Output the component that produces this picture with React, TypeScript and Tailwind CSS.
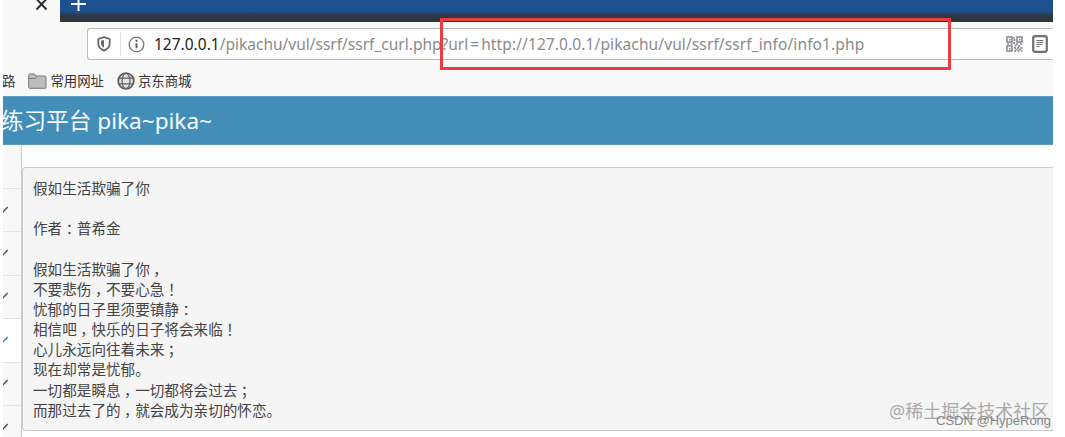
import type { ReactNode } from 'react';

const POEM = [
  '假如生活欺骗了你',
  '',
  '作者：普希金',
  '',
  '假如生活欺骗了你，',
  '不要悲伤，不要心急！',
  '忧郁的日子里须要镇静：',
  '相信吧，快乐的日子将会来临！',
  '心儿永远向往着未来；',
  '现在却常是忧郁。',
  '一切都是瞬息，一切都将会过去；',
  '而那过去了的，就会成为亲切的怀恋。',
];

const MENU = [
  { id: 2, active: false },
  { id: 3, active: false },
  { id: 4, active: false },
  { id: 5, active: true },
  { id: 6, active: false },
  { id: 7, active: false },
];

function ShieldIcon() {
  return (
    <svg className="h-[16px] w-[14px] shrink-0" viewBox="0 0 14 16" fill="none" stroke="#66666a">
      <path d="M7 1.2 12.7 3v4.6c0 3.2-2 5.6-5.7 7-3.7-1.4-5.7-3.8-5.7-7V3z" strokeWidth="1.8" strokeLinejoin="round" />
      <path d="M7 4v7.7C5 10.6 4 9.3 4 7.5V4.8z" fill="#66666a" stroke="none" />
    </svg>
  );
}

function InfoIcon() {
  return (
    <svg className="h-[17px] w-[17px] shrink-0" viewBox="0 0 17 17" fill="none" stroke="#77777a">
      <circle cx="8.5" cy="8.5" r="7.3" strokeWidth="1.3" />
      <path d="M8.5 7.3v5" stroke="#5c5c60" strokeWidth="1.9" />
      <circle cx="8.5" cy="4.8" r="1.15" fill="#5c5c60" stroke="none" />
    </svg>
  );
}

function FolderIcon() {
  return (
    <svg className="h-[16px] w-[19px] shrink-0" viewBox="0 0 19 16" fill="#bdbdbd" stroke="#77777a">
      <path d="M.7 14.5V2.2q0-1.2 1.2-1.2h4.2q.8 0 1.100.8l.5 1.2h9q1.3 0 1.3 1.2v10.3q0 .8-.8.8H1.5q-.8 0-.8-.8z" />
      <path d="M1 5.5h6.200L9 3.700" fill="none" />
    </svg>
  );
}

function GlobeIcon() {
  return (
    <svg className="h-[18px] w-[18px] shrink-0" viewBox="0 0 18 18" fill="none" stroke="#5f5f63">
      <circle cx="9" cy="9" r="7.8" strokeWidth="1.8" fill="#e4e4e4" />
      <ellipse cx="9" cy="9" rx="4" ry="7.5" strokeWidth="1.2" />
      <path d="M2 6.2h14M2 11.8h14" strokeWidth="1.2" />
    </svg>
  );
}

function QrIcon() {
  return (
    <svg className="h-[16px] w-[17px] shrink-0" viewBox="0 0 17 16" fill="none" stroke="#85858a">
      <path d="M1 1h5v5H1zM11 1h5v5h-5zM1 10h5v5H1z" strokeWidth="1.5" />
      <path d="M3 3h1.5v1.5H3zM13 3h1.5v1.5H13zM3 12h1.5v1.5H3z" fill="#85858a" stroke="none" />
      <path d="M8 1v1.5M8.5 3v2M8 6v2M1 8h2M4.5 8h2M10 8h2M14 8h2M8.5 9.5h2M12 9.8h2M8 11.8h2M11 11.8h2M14.5 11.8h2M9.5 13.5h2M13 13.5h2M8 15h2M11.5 15h2M15 15h1.5" strokeWidth="1.7" />
    </svg>
  );
}

function ReaderIcon() {
  return (
    <svg className="h-[18px] w-[16px] shrink-0" viewBox="0 0 16 18" fill="none" stroke="#707074">
      <rect x="1.2" y="1.2" width="13.6" height="15.6" rx="2" strokeWidth="2.2" />
      <path d="M4.5 5.500h7M4.5 7.500h7M4.5 9.500h6M4.5 11.500h3" strokeWidth="1" />
    </svg>
  );
}

function Bookmark({ icon, label }: { icon?: ReactNode; label: string }) {
  return (
    <div className="flex shrink-0 items-center gap-1">
      {icon}
      <span className="-ml-px text-[13.4px] leading-5">{label}</span>
    </div>
  );
}

function TabStrip() {
  return (
    <div className="flex h-[22px] shrink-0">
      <div className="flex w-[57px] justify-end bg-[#f8f8f8] pr-3">
        <svg className="h-[11px] w-[13px]" viewBox="0 0 13 11" stroke="#292929" strokeWidth="1.9">
          <path d="M1.5-1 11.5 9.5M11.5-1 1.5 9.5" />
        </svg>
      </div>
      <div className="flex-1 bg-linear-to-b from-[#1c508e] from-50% via-[#27405e] via-62% to-[#30353e] to-80% pl-[10px]">
        <svg className="h-[12px] w-[17px]" viewBox="0 0 17 12" stroke="#f4f7fb" strokeWidth="2">
          <path d="M8.5-4v15M1 4h15" />
        </svg>
      </div>
    </div>
  );
}

function AddressBar() {
  return (
    <div className="ml-[84px] mt-[6px] flex h-[32px] shrink-0 items-center rounded-l-[3px] border border-r-0 border-[#bdbdbf] bg-white pl-[9px] pr-[5px]">
      <ShieldIcon />
      <div className="ml-[9px] mr-[7px] h-[24px] w-px bg-[#e2e2e2]" />
      <InfoIcon />
      <div className="ml-[9px] whitespace-nowrap font-['Noto_Sans',sans-serif] text-[15.5px] leading-6 text-[#8b8b8b]">
        <span className="text-[#222]">127.0.0.1</span>/pikachu/vul/ssrf/ssrf_curl.php?url
        <span className="mx-[2px]">=</span>
        <span className="tracking-[0.11px]">http://127.0.0.1/pikachu/vul/ssrf/ssrf_info/info1.php</span>
      </div>
      <div className="ml-auto flex items-center gap-[9px]">
        <QrIcon />
        <ReaderIcon />
      </div>
    </div>
  );
}

function Chevron() {
  return (
    <svg className="h-[7px] w-[6px]" viewBox="0 0 6 7" fill="none" stroke="currentColor" strokeWidth="1.6">
      <path d="M-.5 6.3 4.7 1" />
    </svg>
  );
}

function Sidebar() {
  return (
    <div className="w-[19px] shrink-0 overflow-hidden border-r border-[#ccc] bg-[#f8f8f8]">
      <div className="h-[44px] border-b border-[#e4e4e4]" />
      {MENU.map(({ id, active }) => (
        <div
          key={id}
          className={`flex h-[43.4px] items-center border-b border-[#e4e4e4] pb-[2px] ${active ? 'bg-white text-[#2b7dbc]' : 'text-[#555]'}`}
        >
          <Chevron />
        </div>
      ))}
    </div>
  );
}

// 全角标点在字格内居中
function PoemLine({ text }: { text: string }) {
  return (
    <>
      {text.split(/([，！：；])/).map((part, i) =>
        i % 2 ? <span key={i} className="inline-block w-[1em] indent-[3.5px] leading-none">{part}</span> : part
      )}
      {'\n'}
    </>
  );
}

export default function App() {
  return (
    <main className="relative h-[437px] w-[1065px] overflow-hidden bg-white font-['Noto_Sans','Noto_Sans_CJK_SC',sans-serif]">
      <div className="ml-[3px] flex h-full w-[1050px] flex-col overflow-hidden bg-[#f8f8f8]">
        <TabStrip />
        <AddressBar />

        {/* 书签栏 */}
        <div className="flex h-[36px] shrink-0 items-center gap-[13px] pt-[6px] text-[#333]">
          <Bookmark label="路" />
          <Bookmark icon={<FolderIcon />} label="常用网址" />
          <Bookmark icon={<GlobeIcon />} label="京东商城" />
        </div>

        <header className="flex h-[49px] shrink-0 items-center border-y border-[#5c9bc2] bg-[#438eb9] text-[22.6px] text-[#f5faff]">
          <span className="-ml-[2px] whitespace-nowrap">练习平台 pika~pika~</span>
        </header>

        <div className="flex min-h-0 flex-1 bg-white">
          <Sidebar />
          <pre className="mt-[22px] h-[264px] flex-1 rounded-l-[4px] border border-r-0 border-[#ccc] bg-[#f5f5f5] pl-[10px] pt-[10px] font-['Noto_Sans_CJK_SC',sans-serif] text-[14.6px] leading-[20.15px] text-[#444]">
            {POEM.map((line, i) => <PoemLine key={i} text={line} />)}
          </pre>
        </div>
      </div>

      {/* 标注框 */}
      <div className="absolute left-[440px] top-[18px] h-[52px] w-[511px] border-3 border-[#ea3d40]" />

      {/* 水印 */}
      <span className="absolute left-[889px] top-[399px] whitespace-nowrap text-[18px] leading-6 text-[#aaa]">@稀土掘金技术社区</span>
      <span className="absolute left-[936px] top-[411px] whitespace-nowrap font-['Liberation_Sans',sans-serif] text-[13px] leading-5 text-[#888]">CSDN @HypeRong</span>
    </main>
  );
}
